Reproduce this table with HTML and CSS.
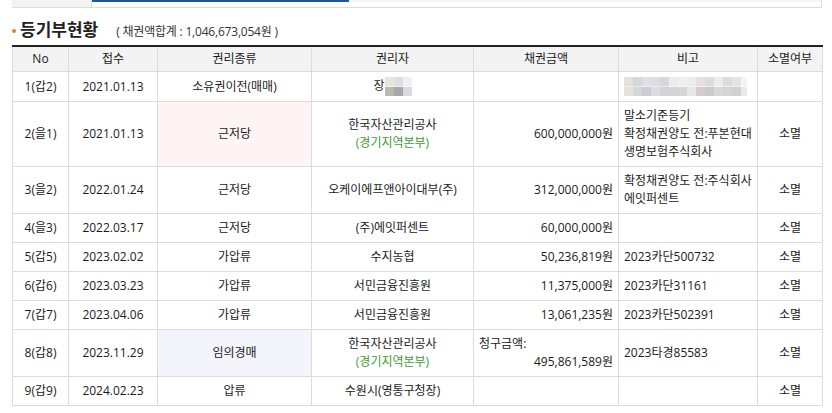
FILE: index.html
```html
<!DOCTYPE html>
<html lang="ko">
<head>
<meta charset="utf-8">
<title>등기부현황</title>
<link rel="stylesheet" href="styles.css">
</head>
<body>
<div class="page">
  <div class="tabs">
    <div class="tab tab-prev"></div>
    <div class="tab tab-active"></div>
    <div class="tab tab-rest"></div>
  </div>
  <div class="title">
    <span class="dot"></span>
    <span class="title-text">등기부현황</span>
    <span class="sum">( 채권액합계 : 1,046,673,054원 )</span>
  </div>
  <table class="reg">
    <colgroup>
      <col class="c-no"><col class="c-date"><col class="c-kind"><col class="c-holder"><col class="c-amt"><col class="c-note"><col class="c-ext">
    </colgroup>
    <thead>
      <tr><th>No</th><th>접수</th><th>권리종류</th><th>권리자</th><th>채권금액</th><th>비고</th><th>소멸여부</th></tr>
    </thead>
    <tbody>
      <tr>
        <td>1(갑2)</td><td>2021.01.13</td><td>소유권이전(매매)</td>
        <td>장<span class="blur blur-name"></span></td>
        <td class="amt"></td>
        <td class="note"><span class="blur blur-note"></span></td>
        <td></td>
      </tr>
      <tr>
        <td>2(을1)</td><td>2021.01.13</td><td class="kind-pink">근저당</td>
        <td>한국자산관리공사<br><span class="branch">(경기지역본부)</span></td>
        <td class="amt">600,000,000원</td>
        <td class="note">말소기준등기<br>확정채권양도 전:푸본현대<br>생명보험주식회사</td>
        <td>소멸</td>
      </tr>
      <tr>
        <td>3(을2)</td><td>2022.01.24</td><td>근저당</td>
        <td>오케이에프앤아이대부(주)</td>
        <td class="amt">312,000,000원</td>
        <td class="note">확정채권양도 전:주식회사<br>에잇퍼센트</td>
        <td>소멸</td>
      </tr>
      <tr>
        <td>4(을3)</td><td>2022.03.17</td><td>근저당</td>
        <td>(주)에잇퍼센트</td>
        <td class="amt">60,000,000원</td>
        <td class="note"></td>
        <td>소멸</td>
      </tr>
      <tr>
        <td>5(갑5)</td><td>2023.02.02</td><td>가압류</td>
        <td>수지농협</td>
        <td class="amt">50,236,819원</td>
        <td class="note">2023카단500732</td>
        <td>소멸</td>
      </tr>
      <tr>
        <td>6(갑6)</td><td>2023.03.23</td><td>가압류</td>
        <td>서민금융진흥원</td>
        <td class="amt">11,375,000원</td>
        <td class="note">2023카단31161</td>
        <td>소멸</td>
      </tr>
      <tr>
        <td>7(갑7)</td><td>2023.04.06</td><td>가압류</td>
        <td>서민금융진흥원</td>
        <td class="amt">13,061,235원</td>
        <td class="note">2023카단502391</td>
        <td>소멸</td>
      </tr>
      <tr>
        <td>8(갑8)</td><td>2023.11.29</td><td class="kind-lav">임의경매</td>
        <td>한국자산관리공사<br><span class="branch">(경기지역본부)</span></td>
        <td class="amt"><div class="claim-label">청구금액:</div><div>495,861,589원</div></td>
        <td class="note">2023타경85583</td>
        <td>소멸</td>
      </tr>
      <tr>
        <td>9(갑9)</td><td>2024.02.23</td><td>압류</td>
        <td>수원시(영통구청장)</td>
        <td class="amt"></td>
        <td class="note"></td>
        <td>소멸</td>
      </tr>
    </tbody>
  </table>
</div>
</body>
</html>
```

FILE: styles.css
```css
html, body {
  margin: 0;
  padding: 0;
  background: #fff;
}
body {
  font-family: "Open Sans", "Noto Sans CJK KR", sans-serif;
  font-size: 12px;
  color: #1a1a1a;
}
.page {
  padding: 0 10px 0 12px;
}
.tabs {
  display: flex;
  height: 7px;
  width: 809px;
  border-bottom: 1px solid #dcdcdc;
  border-right: 1px solid #dcdcdc;
}
.tab-prev {
  width: 79px;
  background: #f3f3f3;
  border-right: 1px solid #dcdcdc;
}
.tab-active {
  width: 257px;
  border-top: 2px solid #1b56a6;
}
.tab-rest {
  flex: 1;
  border-top: 2px solid #f6f6f6;
}
.title {
  display: flex;
  align-items: baseline;
  height: 24px;
  line-height: 24px;
  margin: 10px 0 3px;
}
.dot {
  align-self: flex-start;
  width: 4px;
  height: 4px;
  margin-top: 11px;
  margin-right: 4px;
  border-radius: 50%;
  background: #f07a2a;
}
.title-text {
  font-size: 17px;
  font-weight: bold;
  color: #222;
}
.sum {
  margin-left: 18px;
  font-size: 12px;
  letter-spacing: -0.2px;
  color: #333;
}
.reg {
  width: 810px;
  table-layout: fixed;
  border-collapse: collapse;
  border-top: 2px solid #222;
}
.c-no { width: 56px; }
.c-date { width: 89px; }
.c-kind { width: 154px; }
.c-holder { width: 162px; }
.c-amt { width: 145px; }
.c-note { width: 139px; }
.c-ext { width: 65px; }
.reg th, .reg td {
  border: 1px solid #dcdcdc;
  text-align: center;
  vertical-align: middle;
  line-height: 18px;
  padding: 5px 5px;
  white-space: nowrap;
}
.reg th {
  background: #f3f3f3;
  font-weight: normal;
  padding: 3px 5px;
  border-top: 0;
}
.reg td.amt {
  text-align: right;
}
.reg td.note {
  text-align: left;
}
.claim-label {
  text-align: left;
}
.kind-pink {
  background: #fff4f4;
}
.kind-lav {
  background: #f4f5fc;
}
.branch {
  color: #3c9c32;
}
.blur {
  display: inline-block;
  vertical-align: middle;
  height: 19px;
}
.blur-name {
  width: 27px;
  background:
    linear-gradient(90deg, #e8e4e0 0 9px, #dcdfe3 9px 18px, #f0f0f0 18px) top / 100% 50% no-repeat,
    linear-gradient(90deg, #bcb8b0 0 9px, #a8a8a8 9px 18px, #d8dae4 18px) bottom / 100% 50% no-repeat;
}
.blur-note {
  width: 123px;
  background:
    linear-gradient(90deg, #e4e0dc 0 9px, #d4d8d8 9px 18px, #e0dfe3 18px 27px, #dcdde2 27px 36px, #d8d8da 36px 45px, #ececee 45px 54px, #f0f0f0 54px 63px, #ececee 63px 72px, #e4e0e0 72px 81px, #dcdcdc 81px 90px, #ececec 90px 99px, #dcdcdc 99px 108px, #e4e4e4 108px 117px, #f4f4f8 117px) top / 100% 50% no-repeat,
    linear-gradient(90deg, #e4e0dc 0 9px, #d0d8d8 9px 18px, #ccccd8 18px 27px, #e0dcdc 27px 36px, #d4d4d8 36px 45px, #d4d4d8 45px 54px, #d8d4d8 54px 63px, #e8e8e8 63px 72px, #d4ccd0 72px 81px, #c8ccd0 81px 90px, #d8d8d8 90px 99px, #d4d4d4 99px 108px, #d0d0cc 108px 117px, #e8e8f0 117px) bottom / 100% 50% no-repeat;
}
```
